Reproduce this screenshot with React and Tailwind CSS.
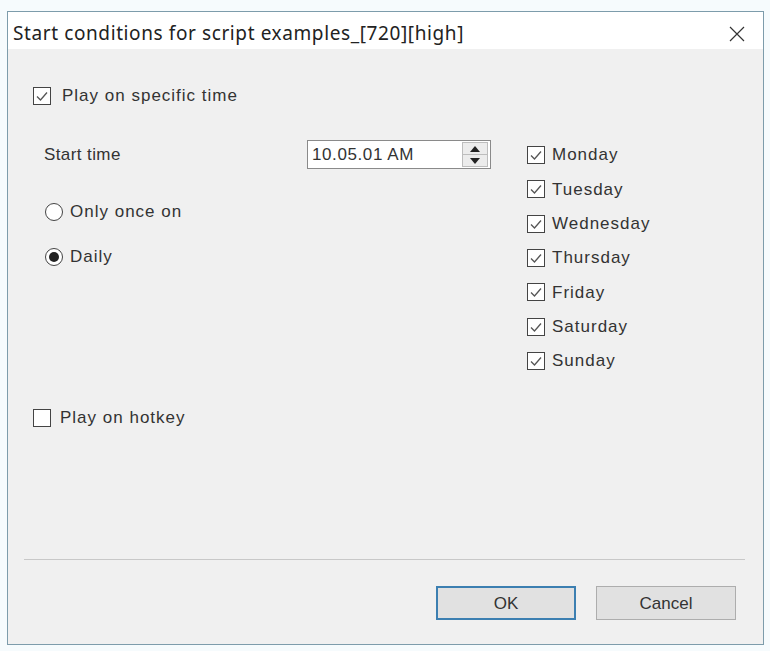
import { useState } from "react";

const days = ["Monday", "Tuesday", "Wednesday", "Thursday", "Friday", "Saturday", "Sunday"];

function CheckBox({ checked, onClick }) {
  return (
    <span
      onClick={onClick}
      className="flex h-[18px] w-[18px] shrink-0 items-center justify-center border border-[#444] bg-white"
    >
      {checked && (
        <svg width="14" height="14" viewBox="0 0 14 14">
          <path d="M2 7.5 L5.5 11 L12 3.5" fill="none" stroke="#555" strokeWidth="1.3" />
        </svg>
      )}
    </span>
  );
}

function Radio({ checked, onClick }) {
  return (
    <span
      onClick={onClick}
      className="flex h-[18px] w-[18px] shrink-0 items-center justify-center rounded-full border border-[#444] bg-white"
    >
      {checked && <span className="h-[10px] w-[10px] rounded-full bg-[#222]" />}
    </span>
  );
}

export default function App() {
  const [specific, setSpecific] = useState(true);
  const [hotkey, setHotkey] = useState(false);
  const [mode, setMode] = useState("daily");
  const [checkedDays, setCheckedDays] = useState(days);

  const toggleDay = (d) =>
    setCheckedDays(checkedDays.includes(d) ? checkedDays.filter((x) => x !== d) : [...checkedDays, d]);

  return (
    <div className="h-[651px] w-[770px] bg-[#f6fbfd] pl-[7px] pt-[11px] font-['Liberation_Sans',Arial,sans-serif] text-[17px] tracking-[1px] text-[#333]">
      <div className="flex h-[634px] w-[757px] flex-col border border-[#7d9cab]">
        {/* title bar */}
        <div className="flex h-[37px] items-center justify-between bg-white pl-[5px] pr-[18px] pt-[6px]">
          <span className="font-['Noto_Sans',sans-serif] text-[19px] tracking-[0.6px] text-[#222]">
            Start conditions for script examples_[720][high]
          </span>
          <svg width="16" height="16" viewBox="0 0 16 16">
            <path d="M1 1 L15 15 M15 1 L1 15" stroke="#333" strokeWidth="1.2" />
          </svg>
        </div>

        {/* body */}
        <div className="flex flex-1 flex-col bg-[#f0f0f0] pl-[25px] pt-[37px]">
          <div className="flex h-[20px] items-center gap-[11px]">
            <CheckBox checked={specific} onClick={() => setSpecific(!specific)} />
            <span>Play on specific time</span>
          </div>

          <div className="mt-[34px] flex h-[240px]">
            <div className="flex flex-col">
              <div className="flex h-[29px] items-center">
                <span className="ml-[11px] w-[263px] tracking-[0.4px]">Start time</span>
                <div className="flex h-[29px] w-[184px] items-center justify-between border border-[#8a8a8a] bg-white pl-[4px] pr-[2px]">
                  <span className="tracking-[0.6px]">10.05.01 AM</span>
                  <div className="flex h-[25px] w-[26px] flex-col border border-[#bdbdbd] bg-[#ececec]">
                    <div className="flex flex-1 items-center justify-center border-b border-[#bdbdbd]">
                      <svg width="10" height="6" viewBox="0 0 10 6">
                        <path d="M0 6 L5 0 L10 6 Z" fill="#222" />
                      </svg>
                    </div>
                    <div className="flex flex-1 items-center justify-center">
                      <svg width="10" height="6" viewBox="0 0 10 6">
                        <path d="M0 0 L5 6 L10 0 Z" fill="#222" />
                      </svg>
                    </div>
                  </div>
                </div>
              </div>
              <div className="ml-[12px] mt-[31px] flex h-[24px] items-center gap-[7px]">
                <Radio checked={mode === "once"} onClick={() => setMode("once")} />
                <span>Only once on</span>
              </div>
              <div className="ml-[12px] mt-[21px] flex h-[24px] items-center gap-[7px]">
                <Radio checked={mode === "daily"} onClick={() => setMode("daily")} />
                <span>Daily</span>
              </div>
            </div>

            <div className="-mt-[2px] ml-[36px] flex flex-col">
              {days.map((d) => (
                <div key={d} className="flex h-[34.33px] items-center gap-[7px]">
                  <CheckBox checked={checkedDays.includes(d)} onClick={() => toggleDay(d)} />
                  <span>{d}</span>
                </div>
              ))}
            </div>
          </div>

          <div className="mt-[28px] flex h-[20px] items-center gap-[9px]">
            <CheckBox checked={hotkey} onClick={() => setHotkey(!hotkey)} />
            <span>Play on hotkey</span>
          </div>

          <div className="flex-1" />

          <div className="-ml-[9px] mr-[18px] h-[2px] border-t border-[#c8c8c8] border-b-white" />

          <div className="mb-[24px] mt-[25px] flex justify-end gap-[20px] pr-[27px] tracking-normal">
            <button className="h-[34px] w-[140px] border-2 border-[#3c7fb1] bg-[#e1e1e1] pt-[2px]">OK</button>
            <button className="h-[34px] w-[140px] border border-[#adadad] bg-[#e1e1e1] pt-[2px]">Cancel</button>
          </div>
        </div>
      </div>
    </div>
  );
}
